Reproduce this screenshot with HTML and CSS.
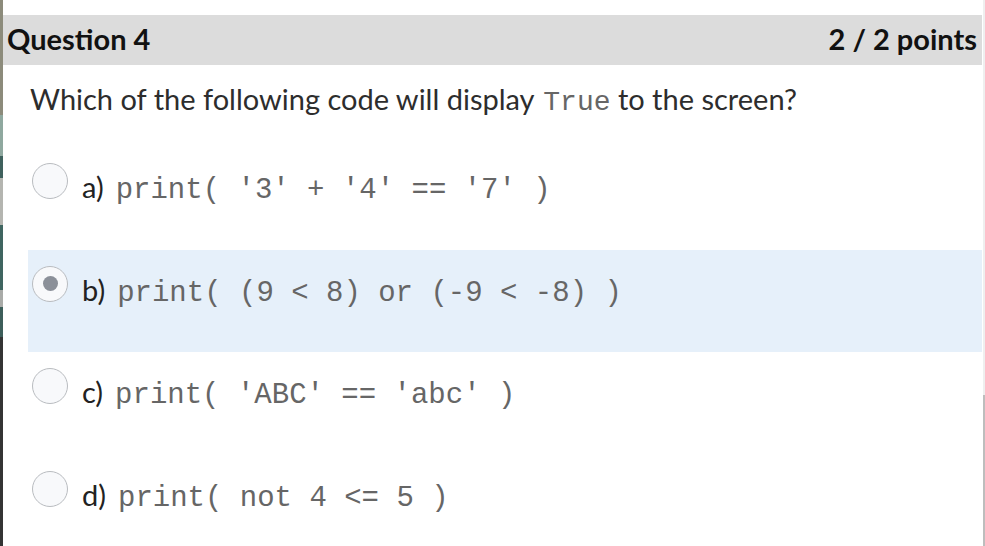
FILE: index.html
```html
<!DOCTYPE html>
<html lang="en">
<head>
<meta charset="utf-8">
<title>Question 4</title>
<link rel="stylesheet" href="styles.css">
</head>
<body>
<div class="frame">
  <div class="edge-left"></div>
  <main class="quiz">
    <header class="q-header">
      <span class="q-title">Question 4</span>
      <span class="q-points">2 / 2 points</span>
    </header>
    <p class="q-text">Which of the following code will display <code class="inline-code">True</code> to the screen?</p>
    <div class="options">
      <div class="option">
        <span class="radio"></span>
        <span class="label"><span class="letter">a)</span><code class="code">print( '3' + '4' == '7' )</code></span>
      </div>
      <div class="option selected">
        <span class="radio checked"></span>
        <span class="label"><span class="letter">b)</span><code class="code">print( (9 &lt; 8) or (-9 &lt; -8) )</code></span>
      </div>
      <div class="option">
        <span class="radio"></span>
        <span class="label"><span class="letter">c)</span><code class="code">print( 'ABC' == 'abc' )</code></span>
      </div>
      <div class="option">
        <span class="radio"></span>
        <span class="label"><span class="letter">d)</span><code class="code">print( not 4 &lt;= 5 )</code></span>
      </div>
    </div>
  </main>
  <div class="edge-right"></div>
</div>
</body>
</html>
```

FILE: styles.css
```css
html, body {
  margin: 0;
  padding: 0;
  background: #ffffff;
}

body {
  font-family: "Lato", "Liberation Sans", sans-serif;
  color: #2b2b2b;
  overflow: hidden;
}

.frame {
  display: flex;
  width: 985px;
  height: 546px;
  overflow: hidden;
}

.edge-left {
  width: 3px;
  flex: none;
  background: linear-gradient(
    to bottom,
    #8c8b7b 0px, #8c8b7b 115px,
    #8fa89f 115px, #8fa89f 156px,
    #3f615d 156px, #3f615d 178px,
    #b4b5b0 178px, #b4b5b0 225px,
    #3f6560 225px, #3f6560 290px,
    #a9aba8 290px, #a9aba8 307px,
    #3d5e5a 307px, #3d5e5a 337px,
    #343434 337px, #343434 546px
  );
}

.edge-right {
  width: 3px;
  flex: none;
  background: linear-gradient(
    to right,
    #ffffff 0px, #ffffff 1px,
    transparent 1px
  ),
  linear-gradient(
    to bottom,
    #efefef 0px, #efefef 395px,
    #bdbdbd 395px, #bdbdbd 546px
  );
}

.quiz {
  flex: 1;
  display: flex;
  flex-direction: column;
  min-width: 0;
}

.quiz > * {
  flex: none;
}

.q-header {
  margin-top: 15px;
  height: 50px;
  box-sizing: border-box;
  background: #dcdcdc;
  display: flex;
  justify-content: space-between;
  align-items: center;
  padding: 0 5px 3px 4px;
  font-weight: 700;
  font-size: 29px;
  color: #111111;
}

.q-text {
  margin: 16px 0 0 27px;
  font-size: 29px;
  line-height: 36px;
  height: 36px;
  color: #2d2d2d;
}

.inline-code {
  font-family: "Liberation Mono", "Courier New", monospace;
  font-size: 28px;
  line-height: 1;
  color: #666666;
  margin-left: 2px;
}

.options {
  margin-top: 30px;
  display: flex;
  flex-direction: column;
}

.option {
  flex: none;
  height: 102.5px;
  margin-left: 25px;
  padding: 16px 0 0 4px;
  box-sizing: border-box;
  display: flex;
  align-items: flex-start;
  gap: 14px;
}

.option.selected {
  background: #e6f0fa;
}

.radio {
  flex: none;
  width: 36px;
  height: 36px;
  box-sizing: border-box;
  border: 1px solid #b9bcc0;
  border-radius: 50%;
  background: #f8f9fb;
  display: flex;
  align-items: center;
  justify-content: center;
}

.radio.checked::after {
  content: "";
  width: 15px;
  height: 15px;
  border-radius: 50%;
  background: #8b9099;
}

.label {
  margin-top: 6px;
  font-size: 29px;
  line-height: 36px;
  color: #222222;
  white-space: pre;
}

.letter {
  margin-right: 12px;
}

.code {
  font-family: "Liberation Mono", "Courier New", monospace;
  font-size: 29px;
  line-height: 1;
  color: #666666;
}
```
